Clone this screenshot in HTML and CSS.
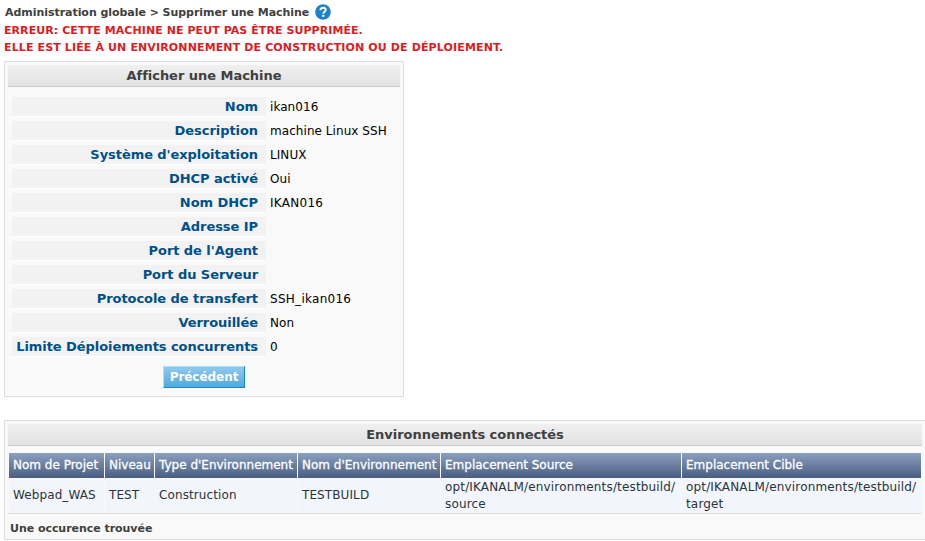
FILE: index.html
```html
<!DOCTYPE html>
<html lang="fr">
<head>
<meta charset="utf-8">
<title>Supprimer une Machine</title>
<link rel="stylesheet" href="styles.css">
</head>
<body>
<header class="crumbs"><span class="crumb-text">Administration globale &gt; Supprimer une Machine</span>
<svg class="help" viewBox="0 0 16 16" width="16" height="16"><circle cx="8" cy="8" r="7.8" fill="#1e82cb"/><path d="M5.400 6.300C5.500 4.500 6.500 3.700 8 3.700c1.600 0 2.700.9 2.700 2.200C10.700 7.600 8.300 7.700 8.300 9.700" fill="none" stroke="#fff" stroke-width="1.900"/><rect x="7.200" y="10.900" width="2.100" height="2" fill="#fff"/></svg></header>
<div class="error"><p class="e1"><span>ERREUR: CETTE MACHINE NE PEUT PAS ÊTRE SUPPRIMÉE.</span></p><p class="e2"><span>ELLE EST LIÉE À UN ENVIRONNEMENT DE CONSTRUCTION OU DE DÉPLOIEMENT.</span></p></div>
<section class="panel machine">
<h2><span>Afficher une Machine</span></h2>
<dl>
<dt>Nom</dt><dd>ikan016</dd>
<dt>Description</dt><dd>machine Linux SSH</dd>
<dt>Système d'exploitation</dt><dd>LINUX</dd>
<dt>DHCP activé</dt><dd>Oui</dd>
<dt>Nom DHCP</dt><dd class="caps">IKAN016</dd>
<dt>Adresse IP</dt><dd></dd>
<dt>Port de l'Agent</dt><dd></dd>
<dt>Port du Serveur</dt><dd></dd>
<dt>Protocole de transfert</dt><dd class="caps">SSH_ikan016</dd>
<dt>Verrouillée</dt><dd>Non</dd>
<dt>Limite Déploiements concurrents</dt><dd>0</dd>
</dl>
<button type="button">Précédent</button>
</section>
<section class="panel environments">
<h2><span>Environnements connectés</span></h2>
<div class="grid head"><span>Nom de Projet</span><span>Niveau</span><span>Type d'Environnement</span><span>Nom d'Environnement</span><span>Emplacement Source</span><span>Emplacement Cible</span></div>
<div class="grid row"><span>Webpad_WAS</span><span>TEST</span><span>Construction</span><span>TESTBUILD</span><span class="path">opt/IKANALM/environments/testbuild/<br>source</span><span class="path">opt/IKANALM/environments/testbuild/<br>target</span></div>
<p class="count">Une occurence trouvée</p>
</section>
</body>
</html>
```

FILE: styles.css
```css
* { box-sizing: border-box; }
body { margin: 0; padding: 4px 0 0 4px; background: #fff; color: #000; font: 12px/17px "DejaVu Sans", Verdana, sans-serif; overflow: hidden; white-space: nowrap; }
h2, p, dl, dd { margin: 0; }
.crumbs { display: flex; height: 17px; padding-left: 1px; gap: 6px; font-size: 11px; font-weight: bold; letter-spacing: -0.045px; color: #404040; }
.help { display: block; }
.error { height: 34px; margin-bottom: 6px; padding-top: 1px; font-size: 11px; font-weight: bold; color: #e01b22; }
.e1 { letter-spacing: 0.07px; }
.e2 { letter-spacing: 0.13px; }
.panel { border: 1px solid #ddd; background: #f9f9f9; padding: 3px; }
.panel h2 { height: 22px; border-bottom: 1px solid #ccc; background: linear-gradient(#f0f0f0, #e2e2e2); color: #404040; font-size: 13px; line-height: 21px; letter-spacing: -0.03px; text-align: center; }
.machine { width: 400px; height: 336px; }
dl { display: grid; grid-template-columns: 254px 1fr; grid-auto-rows: 20px; row-gap: 4px; padding: 10px 0 0 4px; line-height: 19px; }
dt { border-bottom: 1px solid #fff; background: #f2f2f2; padding-right: 8px; color: #00508a; font-size: 13px; font-weight: bold; letter-spacing: -0.06px; text-align: right; }
dd { padding: 1px 0 0 4px; letter-spacing: 0.06px; }
dd.caps { letter-spacing: 0.28px; }
button { display: block; width: 82px; height: 22px; margin: 9px auto 0 155px; padding: 0; border: 1px solid; border-color: #a3e2fb #1a87cb #1a87cb #a3e2fb; background: linear-gradient(#91c9ee, #50a9df); color: #fff; font: bold 12px/19px "DejaVu Sans", Verdana, sans-serif; letter-spacing: -0.05px; }
.environments { width: 922px; height: 120px; margin-top: 23px; }
.grid { display: grid; grid-template-columns: 95px 49px 142px 142px 240px 239px; column-gap: 1px; margin-left: 1px; }
.head { height: 25px; margin-top: 7px; color: #fff; line-height: 24px; }
.grid span { padding-left: 4px; }
.head span { background: linear-gradient(#8ba0bf, #485d82); -webkit-text-stroke: 0.3px #fff; }
.row { height: 34px; margin-top: 1px; color: #2c333c; }
.row span { display: flex; flex-direction: column; justify-content: center; padding-bottom: 2px; background: #f2f6fc; line-height: 17px; letter-spacing: 0.1px; }
.row .path { padding-bottom: 0; letter-spacing: 0.16px; }
.environments .row + .count { width: 914px; border-top: 1px solid #ddd; padding: 6px 0 0 2px; font-size: 11px; font-weight: bold; letter-spacing: -0.04px; color: #404040; }
```
